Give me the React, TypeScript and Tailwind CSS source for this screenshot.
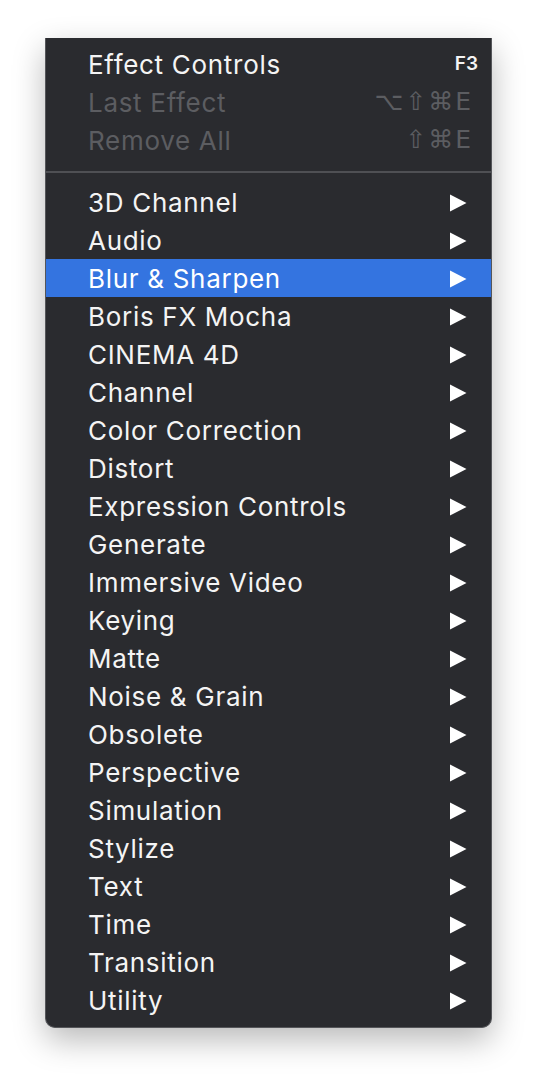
import React from "react";

const groups = [
  "3D Channel",
  "Audio",
  "Blur & Sharpen",
  "Boris FX Mocha",
  "CINEMA 4D",
  "Channel",
  "Color Correction",
  "Distort",
  "Expression Controls",
  "Generate",
  "Immersive Video",
  "Keying",
  "Matte",
  "Noise & Grain",
  "Obsolete",
  "Perspective",
  "Simulation",
  "Stylize",
  "Text",
  "Time",
  "Transition",
  "Utility",
];

function Arrow() {
  return (
    <svg width="18" height="18" viewBox="0 0 18 18" className="shrink-0 mt-[2px]">
      <path d="M1 0.5 L17.5 9 L1 17.5 Z" fill="#ffffff" />
    </svg>
  );
}

export default function App() {
  const font = { fontFamily: "Inter, 'Noto Sans', sans-serif" };

  return (
    <div className="w-[538px] h-[1082px] bg-white overflow-hidden" style={font}>
      <div className="ml-[45px] mt-[38px] w-[447px] bg-[#2a2b2f] border-x border-b border-[#55565a] rounded-b-[10px] shadow-[0_12px_32px_rgba(0,0,0,0.28)] pt-[7px] pb-[8px]">

        {/* top actions */}
        <div className="h-[38px] flex items-center pl-[42px] pr-[13px] text-[26px] tracking-[0.7px] text-[#f4f4f4]">
          <span className="flex-1">Effect Controls</span>
          <span className="text-[19px] font-semibold tracking-normal">F3</span>
        </div>
        <div className="h-[38px] flex items-center pl-[42px] pr-[20px] text-[26px] tracking-[0.7px] text-[#5c5d61]">
          <span className="flex-1">Last Effect</span>
          <span className="text-[25px] tracking-[2px]" style={{ fontFamily: "'DejaVu Sans', sans-serif" }}>
            ⌥⇧⌘<span className="tracking-normal">E</span>
          </span>
        </div>
        <div className="h-[38px] flex items-center pl-[42px] pr-[20px] text-[26px] tracking-[0.7px] text-[#5c5d61]">
          <span className="flex-1">Remove All</span>
          <span className="text-[25px] tracking-[2px]" style={{ fontFamily: "'DejaVu Sans', sans-serif" }}>
            ⇧⌘<span className="tracking-normal">E</span>
          </span>
        </div>

        {/* separator */}
        <div className="pt-[12px] pb-[10px]">
          <div className="h-[2px] bg-[#4f5054]" />
        </div>

        {/* effect groups */}
        {groups.map((g) => (
          <div
            key={g}
            className={
              g === "Blur & Sharpen"
                ? "h-[38px] flex items-center pl-[42px] pr-[24px] text-[26px] tracking-[0.7px] text-white bg-[#3474e0]"
                : "h-[38px] flex items-center pl-[42px] pr-[24px] text-[26px] tracking-[0.7px] text-[#f4f4f4]"
            }
          >
            <span className="flex-1">{g}</span>
            <Arrow />
          </div>
        ))}
      </div>
    </div>
  );
}
